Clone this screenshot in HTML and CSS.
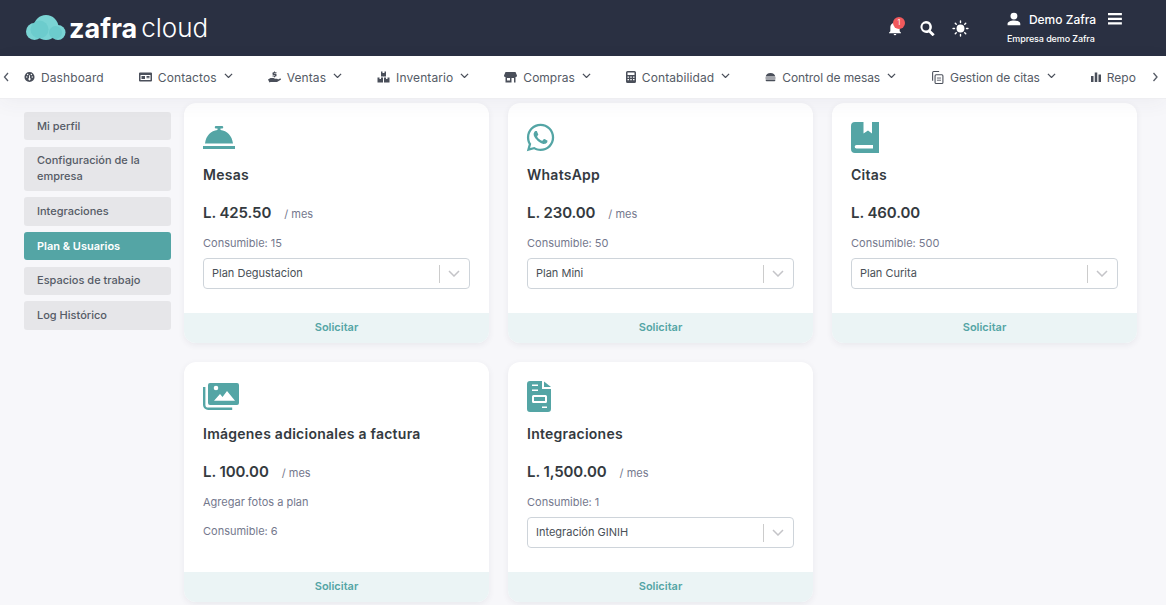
FILE: index.html
```html
<!DOCTYPE html>
<html lang="es">
<head>
<meta charset="utf-8">
<title>Zafra Cloud</title>
<link rel="stylesheet" href="styles.css">
</head>
<body>
<header class="topbar">
  <div class="logo">
    <svg class="logo-cloud" viewBox="0 0 40 26"><g fill="#7ad4d4"><circle cx="8.500" cy="16.500" r="8.500"/><circle cx="20" cy="12.500" r="12.500"/><circle cx="32" cy="17.500" r="7.500"/></g><circle cx="13.500" cy="14.500" r="9" fill="#62c6c8" fill-opacity=".6"/><circle cx="29.500" cy="17.500" r="6.500" fill="#62c6c8" fill-opacity=".6"/></svg>
    <span class="logo-a">zafra</span><span class="logo-b">cloud</span>
  </div>
  <div class="top-actions">
    <span class="bell">
      <svg class="ic-bell" viewBox="0 0 24 24"><path fill="#fff" d="M21 19v1H3v-1l2-2v-6c0-3.100 2-5.800 5-6.700V4a2 2 0 0 1 4 0v.3c3 .9 5 3.600 5 6.700v6l2 2zm-7 2a2 2 0 0 1-4 0h4z"/></svg>
      <span class="badge">1</span>
    </span>
    <svg class="ic-search" viewBox="0 0 24 24"><path fill="#fff" d="M9.500 0a9.500 9.500 0 0 1 7.700 15l6.300 6.300-3.200 3.200-6.300-6.300A9.500 9.500 0 1 1 9.500 0zm0 4a5.500 5.500 0 1 0 0 11 5.500 5.500 0 0 0 0-11z"/></svg>
    <svg class="ic-sun" viewBox="0 0 24 24"><circle cx="12" cy="12" r="5.600" fill="#fff"/><g stroke="#fff" stroke-width="2" stroke-linecap="round"><path d="M12 1.500v2M12 20.500v2M1.500 12h2M20.500 12h2M4.600 4.600l1.400 1.400M18 18l1.400 1.400M4.600 19.400L6 18M18 6l1.400-1.400"/></g></svg>
    <div class="user">
      <div class="user-row">
        <svg class="ic-user" viewBox="0 0 24 24"><path fill="#fff" d="M12 1a6 6 0 1 1 0 12 6 6 0 0 1 0-12zm0 13.500c6 0 11 2.500 11 5.500v3H1v-3c0-3 5-5.500 11-5.500z"/></svg>
        <span class="user-name">Demo Zafra</span>
        <svg class="ic-menu" viewBox="0 0 14 12"><path fill="#fff" d="M0 0h14v2.200H0zM0 4.700h14v2.200H0zM0 9.400h14v2.200H0z"/></svg>
      </div>
      <div class="user-company">Empresa demo Zafra</div>
    </div>
  </div>
</header>

<nav class="navbar">
  <svg class="nav-arrow" viewBox="0 0 8 12"><path d="M6 2L2.500 6 6 10" fill="none" stroke="#555b66" stroke-width="1.300"/></svg>
  <div class="nav-track">
    <a class="nav-item"><svg class="ni ni-n" viewBox="0 0 24 24"><path fill="#4a4f5a" d="M12 1a11 11 0 1 1 0 22 11 11 0 0 1 0-22zm-6 9.500a1.500 1.500 0 1 0 0 3 1.500 1.500 0 0 0 0-3zm12 0a1.500 1.500 0 1 0 0 3 1.500 1.500 0 0 0 0-3zM8 5a1.500 1.500 0 1 0 0 3 1.500 1.500 0 0 0 0-3zm8 0a1.500 1.500 0 1 0 0 3 1.500 1.500 0 0 0 0-3zm-5 3v6.300a2.500 2.500 0 1 0 2 0V8z"/></svg><span>Dashboard</span></a>
    <a class="nav-item"><svg class="ni ni-w" viewBox="0 0 26 22"><path fill="#4a4f5a" fill-rule="evenodd" d="M2 2h22a2 2 0 0 1 2 2v14a2 2 0 0 1-2 2H2a2 2 0 0 1-2-2V4a2 2 0 0 1 2-2zm1 5v10h20V7zm2 2h7v6H5zm10 0h6v1.800h-6zm0 2.500h6v1.800h-6z"/></svg><span>Contactos</span><svg class="chev" viewBox="0 0 10 6"><path d="M1 1l4 4 4-4" fill="none" stroke="#4a4f5a" stroke-width="1.400"/></svg></a>
    <a class="nav-item"><svg class="ni ni-w" viewBox="0 0 26 24"><path fill="#4a4f5a" d="M12 1h2v1.500h3v2h-5v1h3.500A1.500 1.500 0 0 1 17 7v2.500a1.500 1.500 0 0 1-1.500 1.500H14v1.500h-2V11H9V9h5V8h-3.500A1.500 1.500 0 0 1 9 6.500V4a1.500 1.500 0 0 1 1.500-1.500H12zM0 17l5-3h6l3 1.500h4a1.500 1.500 0 0 1 0 3h-5l7-1.500 4-2a1.500 1.500 0 0 1 1.500 2.500L18 22H5l-2 1z"/></svg><span>Ventas</span><svg class="chev" viewBox="0 0 10 6"><path d="M1 1l4 4 4-4" fill="none" stroke="#4a4f5a" stroke-width="1.400"/></svg></a>
    <a class="nav-item"><svg class="ni ni-w" viewBox="0 0 26 24"><path fill="#4a4f5a" d="M8 1h3v3h4V1h3v10H8zM1 13h11v10H1zm13 0h11v10H14zM5 13v3h3v-3zm13 0v3h3v-3z" fill-rule="evenodd"/></svg><span>Inventario</span><svg class="chev" viewBox="0 0 10 6"><path d="M1 1l4 4 4-4" fill="none" stroke="#4a4f5a" stroke-width="1.400"/></svg></a>
    <a class="nav-item nav-flat"><svg class="ni ni-w" viewBox="0 0 26 24"><path fill="#4a4f5a" fill-rule="evenodd" d="M3 2h20l3 7c0 2-1.500 3-3 3v11h-3v-9h-5v9H3V12c-1.500 0-3-1-3-3zm3 12v5h6v-5z"/></svg><span>Compras</span><svg class="chev" viewBox="0 0 10 6"><path d="M1 1l4 4 4-4" fill="none" stroke="#4a4f5a" stroke-width="1.400"/></svg></a>
    <a class="nav-item"><svg class="ni ni-s" viewBox="0 0 20 24"><path fill="#4a4f5a" fill-rule="evenodd" d="M3 0h14a3 3 0 0 1 3 3v18a3 3 0 0 1-3 3H3a3 3 0 0 1-3-3V3a3 3 0 0 1 3-3zm0 3v5h14V3zm0 8v2.500h3V11zm5.500 0v2.500h3V11zm5.500 0v2.500h3V11zM3 16v2.500h3V16zm5.500 0v2.500h3V16zm5.500 0v2.500h3V16z"/></svg><span>Contabilidad</span><svg class="chev" viewBox="0 0 10 6"><path d="M1 1l4 4 4-4" fill="none" stroke="#4a4f5a" stroke-width="1.400"/></svg></a>
    <a class="nav-item nav-tight"><svg class="ni ni-n" viewBox="0 0 24 24"><path fill="#4a4f5a" d="M12 3c6 0 10 3 10.500 8h-21C2 6 6 3 12 3zM1 13h22v2.500H1zm.5 4.500h21V19a2 2 0 0 1-2 2h-17a2 2 0 0 1-2-2z"/></svg><span>Control de mesas</span><svg class="chev" viewBox="0 0 10 6"><path d="M1 1l4 4 4-4" fill="none" stroke="#4a4f5a" stroke-width="1.400"/></svg></a>
    <a class="nav-item nav-tight"><svg class="ni ni-c" viewBox="0 0 24 24"><path fill="none" stroke="#4a4f5a" stroke-width="2" d="M9.500 7H20a2 2 0 0 1 2 2v12a2 2 0 0 1-2 2H9.500a2 2 0 0 1-2-2V9a2 2 0 0 1 2-2zM3 18V3a2 2 0 0 1 2-2h10"/><path stroke="#4a4f5a" stroke-width="1.600" d="M11 13h7.500M11 17h7.500"/></svg><span>Gestion de citas</span><svg class="chev" viewBox="0 0 10 6"><path d="M1 1l4 4 4-4" fill="none" stroke="#4a4f5a" stroke-width="1.400"/></svg></a>
    <a class="nav-item nav-flat"><svg class="ni ni-s" viewBox="0 0 20 20"><path fill="#4a4f5a" d="M0 8h5v12H0zM7.500 1h5v19h-5zM15 5h5v15h-5z"/></svg><span>Repo</span></a>
  </div>
  <svg class="nav-arrow nav-arrow-r" viewBox="0 0 8 12"><path d="M2.500 2L6 6l-3.500 4" fill="none" stroke="#555b66" stroke-width="1.300"/></svg>
</nav>

<div class="page">
  <aside class="side">
    <a class="side-item">Mi perfil</a>
    <a class="side-item">Configuración de la empresa</a>
    <a class="side-item">Integraciones</a>
    <a class="side-item side-active">Plan &amp; Usuarios</a>
    <a class="side-item">Espacios de trabajo</a>
    <a class="side-item">Log Histórico</a>
  </aside>
  <main class="plans">
    <section class="card">
      <div class="card-body">
        <div class="card-icon"><svg class="ic-bellhop" viewBox="0 0 32 24"><path fill="#54a5a5" d="M13 0h6a1 1 0 0 1 0 2.500h-1.500V4C24 4.700 29 9.500 30 17.500H2C3 9.500 8 4.700 14.500 4V2.500H13A1 1 0 0 1 13 0zM0 20h32v3H0z"/></svg></div>
        <h2 class="card-title">Mesas</h2>
        <div class="price"><strong>L. 425.50</strong><span class="per">/ mes</span></div>
        <p class="meta">Consumible: 15</p>
        <div class="select"><span class="select-val">Plan Degustacion</span><span class="select-sep"></span><svg class="select-chev" viewBox="0 0 12 7"><path d="M1 1l5 5 5-5" fill="none" stroke="#c4c4c8" stroke-width="1.500"/></svg></div>
      </div>
      <a class="card-foot">Solicitar</a>
    </section>
    <section class="card">
      <div class="card-body">
        <div class="card-icon"><svg class="ic-wa" viewBox="0 0 24 24"><path fill="#54a5a5" d="M12.040 2C6.580 2 2.130 6.450 2.130 11.910C2.130 13.660 2.590 15.360 3.450 16.860L2.050 22L7.300 20.620C8.750 21.410 10.380 21.830 12.040 21.830C17.500 21.830 21.950 17.380 21.950 11.920C21.950 9.270 20.920 6.780 19.050 4.910C17.180 3.030 14.690 2 12.040 2M12.050 3.670C14.250 3.670 16.310 4.530 17.870 6.090C19.420 7.650 20.280 9.720 20.280 11.920C20.280 16.460 16.580 20.150 12.040 20.150C10.560 20.150 9.110 19.760 7.850 19L7.550 18.830L4.430 19.650L5.260 16.610L5.060 16.290C4.240 15 3.800 13.470 3.800 11.910C3.810 7.370 7.500 3.670 12.050 3.670M8.530 7.330C8.370 7.330 8.100 7.390 7.870 7.640C7.650 7.890 7 8.500 7 9.710C7 10.930 7.890 12.100 8 12.270C8.140 12.440 9.760 14.940 12.250 16C12.840 16.270 13.300 16.420 13.660 16.530C14.250 16.720 14.790 16.690 15.220 16.630C15.700 16.560 16.680 16.030 16.890 15.450C17.100 14.870 17.100 14.380 17.040 14.270C16.970 14.170 16.810 14.110 16.560 14C16.310 13.860 15.090 13.260 14.870 13.180C14.640 13.100 14.500 13.060 14.310 13.300C14.150 13.550 13.670 14.110 13.530 14.270C13.380 14.440 13.240 14.460 13 14.340C12.740 14.210 11.940 13.950 11 13.110C10.260 12.450 9.770 11.640 9.620 11.390C9.500 11.150 9.610 11 9.730 10.890C9.840 10.780 10 10.600 10.100 10.450C10.230 10.310 10.270 10.200 10.350 10.040C10.430 9.870 10.390 9.730 10.330 9.610C10.270 9.500 9.770 8.260 9.560 7.770C9.360 7.290 9.160 7.350 9 7.340C8.860 7.340 8.700 7.330 8.530 7.330Z"/></svg></div>
        <h2 class="card-title">WhatsApp</h2>
        <div class="price"><strong>L. 230.00</strong><span class="per">/ mes</span></div>
        <p class="meta">Consumible: 50</p>
        <div class="select"><span class="select-val">Plan Mini</span><span class="select-sep"></span><svg class="select-chev" viewBox="0 0 12 7"><path d="M1 1l5 5 5-5" fill="none" stroke="#c4c4c8" stroke-width="1.500"/></svg></div>
      </div>
      <a class="card-foot">Solicitar</a>
    </section>
    <section class="card">
      <div class="card-body">
        <div class="card-icon"><svg class="ic-book" viewBox="0 0 28 31"><path fill="#54a5a5" fill-rule="evenodd" d="M4 0h8.500v11.500l4.500-3 4 3V0H28v31H4a4 4 0 0 1-4-4V4a4 4 0 0 1 4-4zm1.500 23a1.800 1.800 0 0 0 0 3.600H22V23z"/></svg></div>
        <h2 class="card-title">Citas</h2>
        <div class="price"><strong>L. 460.00</strong></div>
        <p class="meta">Consumible: 500</p>
        <div class="select"><span class="select-val">Plan Curita</span><span class="select-sep"></span><svg class="select-chev" viewBox="0 0 12 7"><path d="M1 1l5 5 5-5" fill="none" stroke="#c4c4c8" stroke-width="1.500"/></svg></div>
      </div>
      <a class="card-foot">Solicitar</a>
    </section>
    <section class="card">
      <div class="card-body">
        <div class="card-icon"><svg class="ic-img" viewBox="0 0 36 28"><path fill="#54a5a5" fill-rule="evenodd" d="M7 0h27a2 2 0 0 1 2 2v18a2 2 0 0 1-2 2H7a2 2 0 0 1-2-2V2a2 2 0 0 1 2-2zm6 2.700a2.300 2.300 0 1 0 0 4.600 2.300 2.300 0 0 0 0-4.600zM24 8l-4.500 6-2.500-3-6 6.800h21z"/><path fill="none" stroke="#54a5a5" stroke-width="2.400" d="M1.200 4v18a4 4 0 0 0 4 3.800h24"/></svg></div>
        <h2 class="card-title">Imágenes adicionales a factura</h2>
        <div class="price"><strong>L. 100.00</strong><span class="per">/ mes</span></div>
        <p class="meta">Agregar fotos a plan</p>
        <p class="meta meta-next">Consumible: 6</p>
      </div>
      <a class="card-foot">Solicitar</a>
    </section>
    <section class="card">
      <div class="card-body">
        <div class="card-icon"><svg class="ic-file" viewBox="0 0 24 31"><path fill="#54a5a5" fill-rule="evenodd" d="M3 0h12v8h9v20a3 3 0 0 1-3 3H3a3 3 0 0 1-3-3V3a3 3 0 0 1 3-3zm2 3.500V5h6V3.500zm0 5V10h6V8.500zM6.500 14A1.500 1.500 0 0 0 5 15.500v5A1.500 1.500 0 0 0 6.500 22h12a1.500 1.500 0 0 0 1.500-1.500v-5a1.500 1.500 0 0 0-1.500-1.500zm.5 2h11v4H7zM15 25.500V27h5v-1.500z"/><path fill="#54a5a5" d="M17 .5L24 6h-7z"/></svg></div>
        <h2 class="card-title">Integraciones</h2>
        <div class="price"><strong>L. 1,500.00</strong><span class="per">/ mes</span></div>
        <p class="meta">Consumible: 1</p>
        <div class="select"><span class="select-val">Integración GINIH</span><span class="select-sep"></span><svg class="select-chev" viewBox="0 0 12 7"><path d="M1 1l5 5 5-5" fill="none" stroke="#c4c4c8" stroke-width="1.500"/></svg></div>
      </div>
      <a class="card-foot">Solicitar</a>
    </section>
  </main>
</div>
</body>
</html>
```

FILE: styles.css
```css
* { box-sizing: border-box; }
html, body { margin: 0; height: 605px; overflow: hidden; }
body { background: #f7f7fa; font-family: Inter, "Open Sans", sans-serif; color: #343a40; }

.topbar { height: 56px; background: #2a3042; display: flex; align-items: center; justify-content: space-between; padding: 0 44px 0 26px; }
.logo { display: flex; align-items: center; height: 56px; color: #fff; }
.logo-cloud { width: 40px; height: 26px; margin-right: 3px; }
.logo-a { font-weight: 700; font-size: 27px; line-height: 1; }
.logo-b { font-weight: 300; font-size: 26px; margin-left: 4px; line-height: 1; }
.top-actions { display: flex; align-items: center; }
.bell { display: block; position: relative; width: 16px; height: 18px; margin-right: 17px; }
.ic-bell { width: 16px; height: 18px; display: block; }
.badge { position: absolute; top: -2px; left: 6px; width: 12px; height: 12px; border-radius: 50%; background: #f1595c; color: #fff; font-size: 7px; line-height: 12px; text-align: center; }
.ic-search { width: 15px; height: 15px; margin-right: 17px; }
.ic-sun { width: 17px; height: 17px; margin-right: 38px; }
.user { width: 115px; height: 44px; padding-top: 3px; }
.user-row { display: flex; align-items: center; height: 20px; }
.ic-user { width: 14px; height: 14px; margin-right: 8px; }
.user-name { font-size: 12px; font-weight: 500; color: #fff; width: 80px; white-space: nowrap; }
.ic-menu { width: 14px; height: 12px; }
.user-company { font-size: 9px; font-weight: 500; color: #fff; margin-top: 4px; white-space: nowrap; letter-spacing: -.1px; }

.navbar { position: relative; z-index: 2; height: 43px; background: #fff; border-bottom: 1px solid #eeeef1; display: flex; align-items: center; box-shadow: 0 4px 20px rgba(60,60,90,.05); }
.nav-arrow { width: 8px; height: 12px; margin-left: 2px; flex: none; }
.nav-arrow-r { margin-left: 10px; margin-right: 7px; }
.nav-track { display: flex; align-items: center; gap: 35px; flex: 1; min-width: 0; overflow: hidden; margin-left: 14px; white-space: nowrap; }
.nav-item { display: flex; align-items: center; flex: none; font-size: 12px; letter-spacing: .1px; color: #555b66; }
.nav-flat { letter-spacing: 0; }
.nav-tight { letter-spacing: -.1px; }
.ni { width: 12px; height: 12px; margin-right: 6px; flex: none; }
.ni-w { width: 13px; }
.ni-n { width: 11px; }
.ni-s { width: 10px; }
.ni-c { width: 13px; height: 13px; }
.chev { width: 9px; height: 5.400px; margin-left: 7px; flex: none; margin-top: -3px; }

.page { display: flex; align-items: flex-start; padding: 4px 0 0 24px; }
.side { width: 147px; flex: none; margin-top: 9px; margin-right: 13px; display: flex; flex-direction: column; gap: 6.500px; }
.side-item { background: #e6e6e9; border-radius: 3px; padding: 5.600px 13px 6.600px; font-size: 11px; line-height: 16px; color: #555b66; font-weight: 500; }
.side-active { background: #54a5a5; color: #fff; font-weight: 600; }

.plans { display: grid; grid-template-columns: repeat(3, 305px); grid-auto-rows: 240px; gap: 19px; }
.card { background: #fff; border-radius: 12px; display: flex; flex-direction: column; overflow: hidden; box-shadow: 0 2px 6px rgba(60,60,90,.08); }
.card-body { flex: 1; padding: 19px 19px 0; }
.card-icon { height: 33px; display: flex; align-items: flex-start; }
.card-title { margin: 10px 0 0; font-size: 14px; line-height: 20px; font-weight: 600; color: #343a40; letter-spacing: .25px; }
.price { display: flex; align-items: baseline; margin-top: 17px; line-height: 22px; height: 22px; }
.price strong { font-size: 15px; font-weight: 600; color: #343a40; letter-spacing: -.1px; }
.per { font-size: 11px; color: #74788d; margin-left: 13px; }
.meta { margin: 11px 0 0; font-size: 11px; line-height: 16px; color: #74788d; }
.meta-next { margin-top: 13px; }
.select { display: flex; align-items: center; height: 31px; margin-top: 7px; border: 1px solid #ced4da; border-radius: 4px; padding: 0 9px 0 8px; }
.select-val { flex: 1; font-size: 11px; color: #495057; padding-bottom: 2px; }
.select-sep { width: 1px; height: 18px; background: #ccc; margin-right: 8px; }
.select-chev { width: 12px; height: 7px; }
.card-foot { display: block; height: 30px; flex: none; background: #ebf4f5; text-align: center; line-height: 29px; font-size: 11px; font-weight: 600; color: #54a5a5; }

.ic-bellhop { width: 32px; height: 24px; margin-top: 4px; }
.ic-wa { width: 33px; height: 33px; margin-left: -3px; margin-top: -1px; }
.ic-book { width: 28px; height: 31px; }
.ic-img { width: 36px; height: 28px; margin-top: 2px; }
.ic-file { width: 24px; height: 31px; }
```
